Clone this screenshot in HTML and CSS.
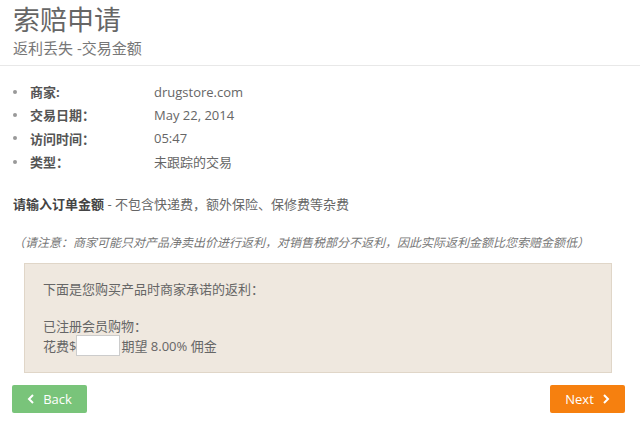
FILE: index.html
```html
<!DOCTYPE html>
<html lang="zh">
<head>
<meta charset="utf-8">
<link rel="stylesheet" href="styles.css">
</head>
<body>
<header class="header">
  <h1 class="title">索赔申请</h1>
  <div class="subtitle">返利丢失 -交易金额</div>
</header>
<main class="content">
  <ul class="details">
    <li class="row"><span class="label">商家:</span><span class="value">drugstore.com</span></li>
    <li class="row"><span class="label">交易日期：</span><span class="value">May 22, 2014</span></li>
    <li class="row"><span class="label">访问时间：</span><span class="value">05:47</span></li>
    <li class="row"><span class="label">类型：</span><span class="value">未跟踪的交易</span></li>
  </ul>
  <p class="prompt"><strong>请输入订单金额</strong> - 不包含快递费，额外保险、保修费等杂费</p>
  <p class="note">（请注意：商家可能只对产品净卖出价进行返利，对销售税部分不返利，因此实际返利金额比您索赔金额低）</p>
  <div class="box">
    <p class="box-line">下面是您购买产品时商家承诺的返利：</p>
    <p class="box-line member">已注册会员购物：</p>
    <div class="spend"><span>花费$</span><input class="amount" type="text"><span>期望 8.00% 佣金</span></div>
  </div>
  <div class="actions">
    <button class="btn back"><svg class="chev" viewBox="0 0 8 10" width="8" height="10"><path d="M6 1 L2 5 L6 9" fill="none" stroke="currentColor" stroke-width="2"/></svg>Back</button>
    <button class="btn next">Next<svg class="chev" viewBox="0 0 8 10" width="8" height="10"><path d="M2 1 L6 5 L2 9" fill="none" stroke="currentColor" stroke-width="2"/></svg></button>
  </div>
</main>
</body>
</html>
```
FILE: styles.css
```css
* { box-sizing: border-box; }
html, body { margin: 0; padding: 0; background: #fff; }
body {
  font-family: "Open Sans", "Noto Sans CJK SC", sans-serif;
  color: #555;
  font-size: 13px;
}
.header {
  padding: 2px 13px 7px;
  border-bottom: 1px solid #e8e8e8;
}
.title {
  margin: 0;
  font-size: 27px;
  font-weight: 400;
  line-height: 36px;
  color: #666;
}
.subtitle {
  font-size: 15px;
  line-height: 20px;
  color: #777;
}
.content { padding: 0 13px; }
.details {
  list-style: none;
  margin: 14px 0 0;
  padding: 0;
}
.row {
  display: flex;
  align-items: center;
  height: 23.3px;
}
.row::before {
  content: "";
  width: 4px;
  height: 4px;
  border-radius: 50%;
  background: #999;
  margin-right: 13px;
  flex: none;
}
.label {
  width: 124px;
  font-weight: 700;
  color: #555;
}
.value { color: #666; }
.prompt {
  margin: 22px 0 0;
  line-height: 18px;
  color: #666;
}
.prompt strong { color: #444; }
.note {
  margin: 21px 0 0;
  font-style: italic;
  font-size: 12px;
  line-height: 18px;
  color: #777;
}
.box {
  margin: 11px 15px 0 11px;
  height: 110px;
  background: #efe8df;
  border: 1px solid #e0d6c8;
  padding: 16px 18px;
  color: #666;
}
.box-line { margin: 0; line-height: 18px; }
.member { margin-top: 19px; }
.spend { display: flex; align-items: center; line-height: 18px; }
.amount {
  width: 44px;
  height: 21px;
  margin: 0 1px 0 0;
  border: 1px solid #ccc;
  background: #fff;
  padding: 0;
}
.actions {
  display: flex;
  justify-content: space-between;
  margin: 12px 2px 0 -1px;
}
.btn {
  width: 75px;
  height: 28px;
  border: 0;
  border-radius: 2px;
  color: #fff;
  font-family: "Open Sans", sans-serif;
  font-size: 13px;
  display: flex;
  align-items: center;
  justify-content: center;
  gap: 8px;
  padding: 0;
}
.back { background: #79c47a; }
.next { background: #f6800f; }
.chev { flex: none; }
```
